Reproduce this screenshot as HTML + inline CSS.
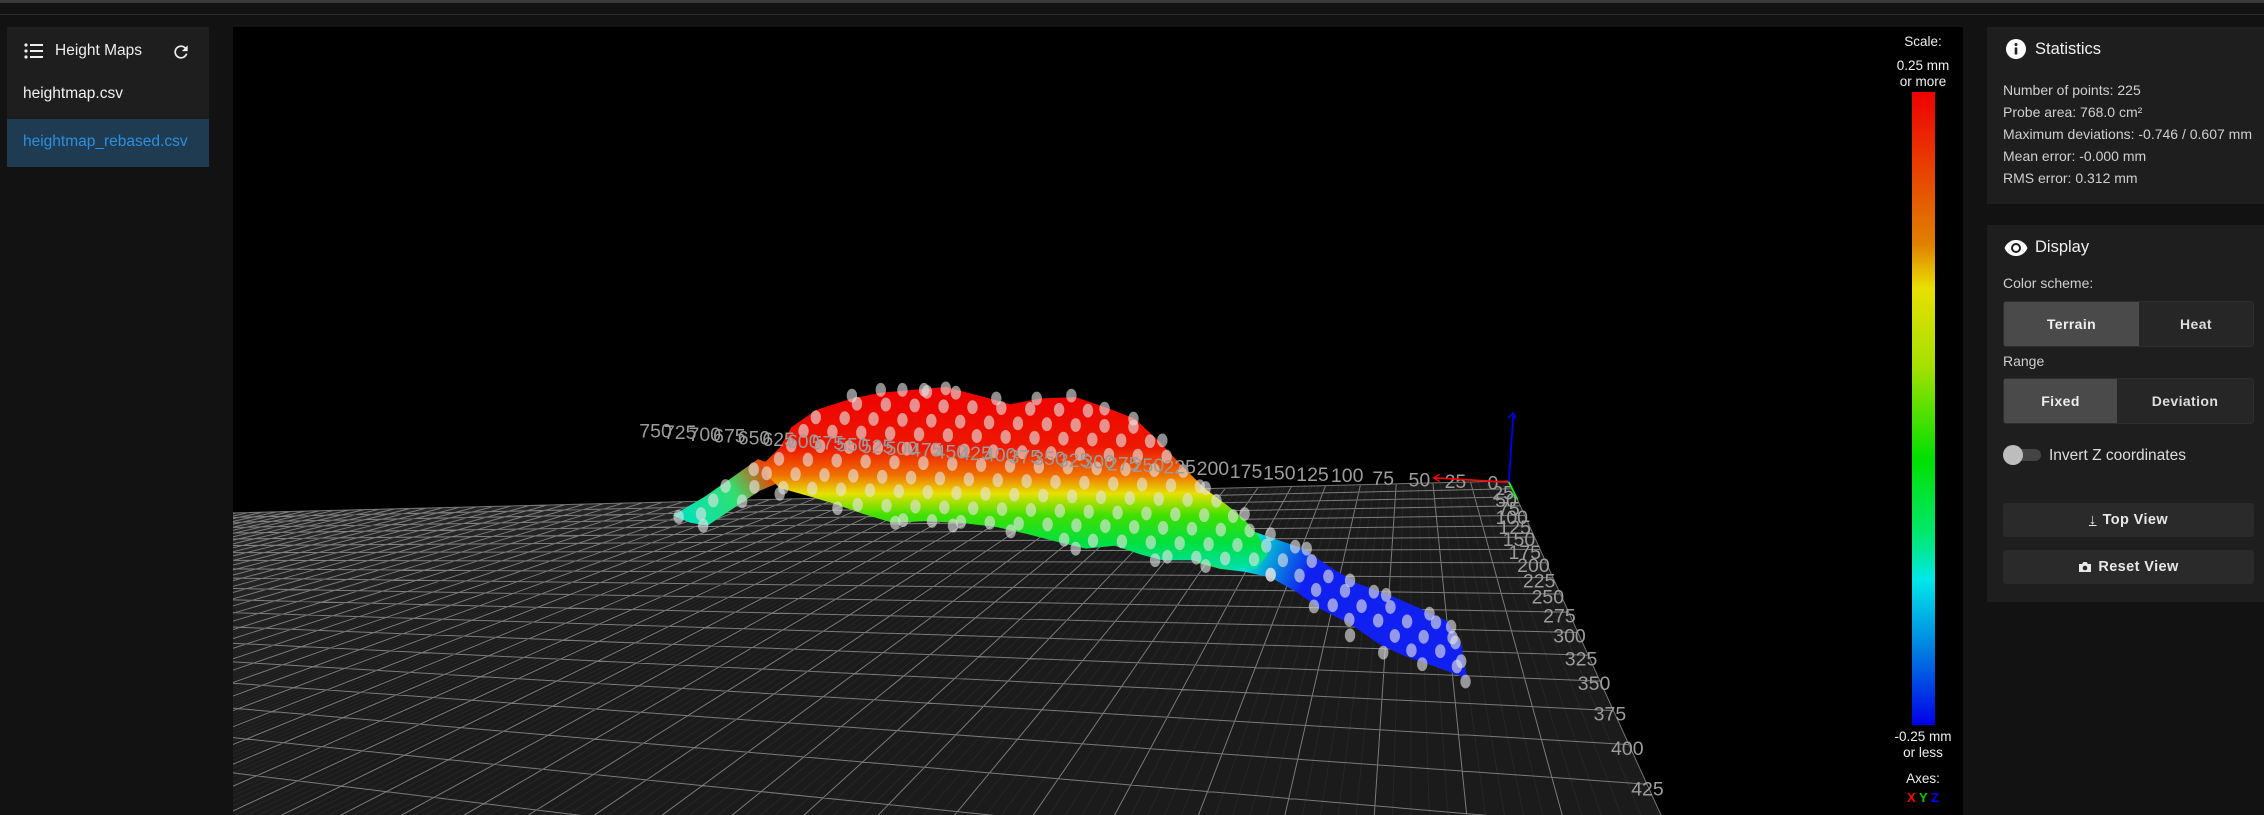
<!DOCTYPE html>
<html><head><meta charset="utf-8">
<style>
*{box-sizing:border-box;margin:0;padding:0}
html,body{width:2264px;height:815px;overflow:hidden;background:#121212;font-family:"Liberation Sans",Arial,sans-serif;color:#fff;position:relative}
.topbar{position:absolute;left:0;top:0;width:2264px;height:3px;background:#3a3a3a}
.topline{position:absolute;left:0;top:14px;width:2264px;height:1px;background:#2c2c2c}
.panel{position:absolute;background:#1e1e1e}
#left{left:7px;top:27px;width:202px;height:140px}
#left .hd{position:absolute;left:0;top:0;width:202px;height:54px}
#left .hd span{position:absolute;left:48px;top:15px;font-size:15.5px;color:#eee}
#left .it1{position:absolute;left:16px;top:58px;font-size:15.5px;color:#f2f2f2}
#left .sel{position:absolute;left:0;top:92px;width:202px;height:48px;background:#1f3b52}
#left .sel span{position:absolute;left:16px;top:14px;font-size:15.5px;color:#2b8fe0}
#canvas{position:absolute;left:233px;top:27px;width:1730px;height:788px;background:#000;overflow:hidden}
#stats{left:1987px;top:27px;width:277px;height:177px}
#disp{left:1987px;top:225px;width:277px;height:377px}
.ttl{position:absolute;left:48px;font-size:16.5px;color:#f0f0f0}
.st{position:absolute;left:16px;font-size:14px;color:#cfcfcf}
.btng{position:absolute;left:16px;width:251px;height:46px;border:1px solid #2e2e2e;border-radius:3px;background:#262626;display:flex;overflow:hidden}
.btng div{display:flex;align-items:center;justify-content:center;font-size:14px;color:#ddd;letter-spacing:.4px;font-weight:bold}
.btng .on{background:#4a4a4a;color:#eee}
.btn{position:absolute;left:16px;width:251px;height:34px;background:#2a2a2a;border-radius:3px;display:flex;align-items:center;justify-content:center;font-size:14.5px;font-weight:bold;color:#e8e8e8;letter-spacing:.4px}
.lbl{position:absolute;left:16px;font-size:14px;color:#cfcfcf}
.sc{position:absolute;width:80px;text-align:center;font-size:13.5px;color:#eee;line-height:16px}
</style></head><body>
<div class="topbar"></div><div class="topline"></div>

<div class="panel" id="left">
  <div class="hd">
    <svg style="position:absolute;left:17px;top:15px" width="20" height="18" viewBox="0 0 20 18"><g fill="#eee"><circle cx="2" cy="3" r="1.6"/><circle cx="2" cy="9" r="1.6"/><circle cx="2" cy="15" r="1.6"/><rect x="6" y="2" width="13" height="2"/><rect x="6" y="8" width="13" height="2"/><rect x="6" y="14" width="13" height="2"/></g></svg>
    <span>Height Maps</span>
    <svg style="position:absolute;left:164px;top:15px" width="20" height="20" viewBox="0 0 24 24"><path fill="#eee" d="M17.65 6.35A7.958 7.958 0 0 0 12 4a8 8 0 1 0 7.730 10h-2.08A6 6 0 1 1 12 6c1.66 0 3.14.69 4.22 1.78L13 11h7V4l-2.35 2.35z"/></svg>
  </div>
  <div class="it1">heightmap.csv</div>
  <div class="sel"><span>heightmap_rebased.csv</span></div>
</div>

<div id="canvas">
<svg id="sv" width="1730" height="788" viewBox="0 0 1730 788" style="position:absolute;left:0;top:0;overflow:hidden">
 <defs>
  <linearGradient id="gb" x1="0" y1="268" x2="0" y2="395" gradientUnits="userSpaceOnUse">
   <stop offset="0" stop-color="#ee0000"/><stop offset="0.33" stop-color="#ee1800"/>
   <stop offset="0.48" stop-color="#f07000"/><stop offset="0.58" stop-color="#e8e000"/>
   <stop offset="0.7" stop-color="#40e000"/><stop offset="0.85" stop-color="#00e040"/>
   <stop offset="1" stop-color="#00e0b0"/>
  </linearGradient>
  <linearGradient id="gt" x1="835" y1="370" x2="905" y2="400" gradientUnits="userSpaceOnUse">
   <stop offset="0" stop-color="#20e020"/><stop offset="0.45" stop-color="#00e0d0"/><stop offset="1" stop-color="#1020f0"/>
  </linearGradient>
  <linearGradient id="gw" x1="470" y1="360" x2="530" y2="322" gradientUnits="userSpaceOnUse">
   <stop offset="0" stop-color="#00e0c0"/><stop offset="0.6" stop-color="#30e070"/><stop offset="1" stop-color="#f04000"/>
  </linearGradient>
 </defs>
 <g id="world" transform="translate(-233,-27)">
  <g id="floor"></g>
  <g transform="scale(1.4439)">
   <polygon fill="url(#gw)" points="466,357 488,344 508,330 525,318 536,322 540,334 526,340 508,352 490,364 478,362"/>
   <polygon fill="url(#gt)" points="835,350 852,356 868,368 885,374 903,380 920,392 940,404 962,412 985,422 1002,430 1012,446 1016,470 995,462 972,454 955,446 935,432 915,422 898,410 880,400 862,396 845,394 830,390"/>
   <polygon id="body" fill="url(#gb)" points="528,322 540,310 548,296 565,284 590,276 610,272 632,270 655,268 678,274 700,280 720,276 745,275 768,283 786,290 802,305 818,322 834,338 850,350 862,360 872,372 878,384 870,394 850,392 825,388 805,388 790,384 772,378 752,380 735,376 712,370 690,365 665,362 640,361 618,362 598,356 578,349 558,343 540,338 532,330"/>
   <g id="dots"></g>
   <g id="labels" font-family="Liberation Sans,Arial,sans-serif" font-size="13.5" fill="#9c9c9c" text-anchor="middle"></g>
   <line x1="1045" y1="334" x2="1048" y2="288" stroke="#0000ff" stroke-width="1.2"/>
   <path d="M1044.5,289.5 L1048,286 L1050,290" stroke="#0000ff" fill="none" stroke-width="1"/>
   <line x1="1045" y1="334" x2="994" y2="331" stroke="#ff0000" stroke-width="1.2"/>
   <path d="M997,328.5 L993,331 L997,333.5" stroke="#ff0000" fill="none" stroke-width="1"/>
   <line x1="1045" y1="334" x2="1051" y2="346" stroke="#00ff00" stroke-width="1.2"/>
  </g>
 </g>
</svg>
<div class="sc" style="left:1650px;top:7px">Scale:</div>
<div class="sc" style="left:1650px;top:31px">0.25 mm<br>or more</div>
<div style="position:absolute;left:1679px;top:65px;width:23px;height:633px;background:linear-gradient(#ee0000 0%,#e84000 12%,#e08000 24%,#e8e000 31%,#a8e000 43%,#00e000 58%,#00e870 70%,#00e8e8 77%,#0080e0 88%,#0000e8 100%)"></div>
<div class="sc" style="left:1650px;top:702px">-0.25 mm<br>or less</div>
<div class="sc" style="left:1650px;top:744px">Axes:</div>
<div class="sc" style="left:1650px;top:763px;font-weight:bold;font-size:13px"><span style="color:#f00">X</span> <span style="color:#0c0">Y</span> <span style="color:#00f">Z</span></div>
</div>

<div class="panel" id="stats">
  <svg style="position:absolute;left:18px;top:11px" width="22" height="22" viewBox="0 0 22 22"><circle cx="11" cy="11" r="10" fill="#fff"/><rect x="9.7" y="9.5" width="2.6" height="7" fill="#1e1e1e"/><circle cx="11" cy="6.5" r="1.5" fill="#1e1e1e"/></svg>
  <div class="ttl" style="top:13px">Statistics</div>
  <div class="st" style="top:55px">Number of points: 225</div>
  <div class="st" style="top:77px">Probe area: 768.0 cm²</div>
  <div class="st" style="top:99px">Maximum deviations: -0.746 / 0.607 mm</div>
  <div class="st" style="top:121px">Mean error: -0.000 mm</div>
  <div class="st" style="top:143px">RMS error: 0.312 mm</div>
</div>

<div class="panel" id="disp">
  <svg style="position:absolute;left:17px;top:14px" width="24" height="18" viewBox="0 0 24 18"><path fill="#fff" d="M12 1C6.5 1 2.3 4.6 0.5 9c1.8 4.4 6 8 11.5 8s9.7-3.6 11.5-8C21.7 4.6 17.5 1 12 1z"/><circle cx="12" cy="9" r="5" fill="#1e1e1e"/><circle cx="12" cy="9" r="3" fill="#fff"/></svg>
  <div class="ttl" style="top:13px">Display</div>
  <div class="lbl" style="top:50px">Color scheme:</div>
  <div class="btng" style="top:76px"><div class="on" style="width:135px">Terrain</div><div style="flex:1">Heat</div></div>
  <div class="lbl" style="top:128px">Range</div>
  <div class="btng" style="top:153px"><div class="on" style="width:113px">Fixed</div><div style="flex:1">Deviation</div></div>
  <div style="position:absolute;left:18px;top:224px;width:36px;height:12px;border-radius:6px;background:#444"></div>
  <div style="position:absolute;left:16px;top:220px;width:20px;height:20px;border-radius:10px;background:#bdbdbd"></div>
  <div style="position:absolute;left:62px;top:222px;font-size:15.5px;color:#ddd">Invert Z coordinates</div>
  <div class="btn" style="top:278px"><span style="font-weight:bold;margin-right:6px;text-decoration:underline">↓</span>Top View</div>
  <div class="btn" style="top:325px"><svg width="14" height="12" viewBox="0 0 14 12" style="margin-right:6px"><path fill="#e8e8e8" d="M1 3h3l1.5-2h3L10 3h3v8H1z"/><circle cx="7" cy="7" r="2.3" fill="#2a2a2a"/></svg>Reset View</div>
</div>

<script>
(function(){
var NS="http://www.w3.org/2000/svg";
var a=0.000513,b=-0.001374;
function P(X,Y){var w=1+a*X+b*Y;return[(1509+a*X*(-1535)+b*Y*1410.7)/w,(481+a*X*557+b*Y*265)/w];}
var fl=document.getElementById('floor');
var XM=3000,YM=690;
var c=[P(0,0),P(XM,0),P(XM,YM),P(0,YM)];
var pg=document.createElementNS(NS,'polygon');
pg.setAttribute('points',c.map(function(p){return p[0].toFixed(1)+','+p[1].toFixed(1)}).join(' '));
pg.setAttribute('fill','#1b1b1b');fl.appendChild(pg);
var d='';
for(var X=0;X<=XM;X+=25){var p=P(X,0),q=P(X,YM);d+='M'+p[0].toFixed(1)+','+p[1].toFixed(1)+'L'+q[0].toFixed(1)+','+q[1].toFixed(1);}
for(var Y=0;Y<=YM;Y+=25){var p=P(0,Y),q=P(XM,Y);d+='M'+p[0].toFixed(1)+','+p[1].toFixed(1)+'L'+q[0].toFixed(1)+','+q[1].toFixed(1);}
var pt=document.createElementNS(NS,'path');pt.setAttribute('d',d);pt.setAttribute('stroke','rgba(255,255,255,0.42)');pt.setAttribute('stroke-width','1');pt.setAttribute('fill','none');fl.appendChild(pt);
var d2='';
for(var X=5;X<=1500;X+=5){if(X%25==0)continue;var p=P(X,0),q=P(X,YM);d2+='M'+p[0].toFixed(1)+','+p[1].toFixed(1)+'L'+q[0].toFixed(1)+','+q[1].toFixed(1);}
var pt2=document.createElementNS(NS,'path');pt2.setAttribute('d',d2);pt2.setAttribute('stroke','rgba(255,255,255,0.05)');pt2.setAttribute('fill','none');fl.insertBefore(pt2,pt);
var polys=[];
document.querySelectorAll('polygon[points]').forEach(function(e){if(e.parentNode.id!='floor'){polys.push(e.getAttribute('points').trim().split(/\s+/).map(function(s){return s.split(',').map(Number)}));}});
function inside(x,y,v){var r=false;for(var i=0,j=v.length-1;i<v.length;j=i++){var xi=v[i][0],yi=v[i][1],xj=v[j][0],yj=v[j][1];if(((yi>y)!=(yj>y))&&(x<(xj-xi)*(y-yi)/(yj-yi)+xi))r=!r;}return r;}
var dg=document.getElementById('dots');
function dot(x,y){var e=document.createElementNS(NS,'ellipse');e.setAttribute('cx',x);e.setAttribute('cy',y);e.setAttribute('rx',3.6);e.setAttribute('ry',4.8);e.setAttribute('fill','rgba(228,228,228,0.62)');dg.appendChild(e);}
for(var j=0;j<22;j++){for(var i=0;i<44;i++){var x=462+i*20+(j%2)*10+j*1.5,y=266+j*10+i*0.6;var ok=false;for(var k=0;k<polys.length;k++)if(inside(x,y,polys[k]))ok=true;
if(ok)dot(x,y);}}
[[470,358],[487,364],[522,325],[540,342],[580,352],[620,362],[660,364],[700,368],[745,380],[800,388],[835,392],[880,398],[910,420],[935,440],[958,452],[985,460],[1015,472],[590,274],[610,270],[625,270],[640,270],[655,269],[690,276],[718,276],[742,274],[765,283],[785,290],[805,305],[835,338],[862,356],[880,370],[905,380],[935,402],[960,412],[990,425],[1005,434],[1008,445],[1012,458]].forEach(function(p){dot(p[0],p[1]);});
var lg=document.getElementById('labels');
function T(s,x,y){var t=document.createElementNS(NS,'text');t.setAttribute('x',x);t.setAttribute('y',y);t.textContent=s;lg.appendChild(t);}
var xl=[[0,1034,339],[25,1008,338],[50,983,337],[75,958,336],[100,933,334],[125,909,333],[150,886,332],[175,863,331],[200,840,329],[225,817,328]];
xl.forEach(function(v){T(v[0],v[1],v[2]);});
for(var k=0;k<=20;k++){var X=250+k*25;var x=795-k*(795-454)/20,y=327-k*(327-303)/20;T(X,x,y);}
var yl=[[25,1041,346],[50,1043,351],[75,1045,357],[100,1047,363],[125,1049,370],[150,1052,378],[175,1056,387],[200,1062,396],[225,1066,407],[250,1072,418],[275,1080,431],[300,1087,445],[325,1095,461],[350,1104,478],[375,1115,499],[400,1127,523],[425,1141,551]];
yl.forEach(function(v){T(v[0],v[1],v[2]);});
})();
</script>
</body></html>
